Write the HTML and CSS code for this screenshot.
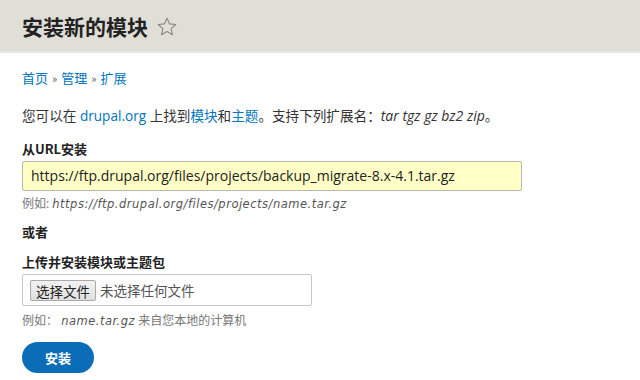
FILE: index.html
```html
<!DOCTYPE html>
<html lang="zh-CN">
<head>
<meta charset="utf-8">
<title>安装新的模块</title>
<link rel="stylesheet" href="styles.css">
</head>
<body>
<header class="page-header">
  <h1 class="title">安装新的模块</h1>
  <svg class="star" width="20" height="20" viewBox="0 0 20 20" aria-hidden="true">
    <path d="M10 1.2l2.6 5.7 6.2.6-4.7 4.2 1.4 6.1-5.5-3.2-5.5 3.2 1.4-6.1-4.7-4.2 6.2-.6z" fill="none" stroke="#8a8a84" stroke-width="1.1" stroke-linejoin="round"/>
  </svg>
</header>
<main class="content">
  <nav class="breadcrumb"><a href="#">首页</a><span class="sep">»</span><a href="#">管理</a><span class="sep">»</span><a href="#">扩展</a></nav>
  <p class="intro">您可以在 <a href="#">drupal.org</a> 上找到<a href="#">模块</a>和<a href="#">主题</a>。支持下列扩展名：<em>tar tgz gz bz2 zip</em>。</p>
  <div class="field field-url">
    <label class="label">从URL安装</label>
    <div class="text-input">https://ftp.drupal.org/files/projects/backup_migrate-8.x-4.1.tar.gz</div>
    <div class="desc">例如: <em class="mono">https://ftp.drupal.org/files/projects/name.tar.gz</em></div>
  </div>
  <div class="or">或者</div>
  <div class="field field-upload">
    <label class="label">上传并安装模块或主题包</label>
    <div class="file-input"><span class="file-btn">选择文件</span><span class="file-none">未选择任何文件</span></div>
    <div class="desc">例如： <em class="mono">name.tar.gz</em> 来自您本地的计算机</div>
  </div>
  <button class="install">安装</button>
</main>
</body>
</html>
```
FILE: styles.css
```css
html, body {
  margin: 0;
  padding: 0;
  background: #fff;
}
body {
  font-family: "Open Sans", "Noto Sans CJK SC", sans-serif;
  color: #222;
  font-size: 13px;
}
a {
  color: #0074bd;
  text-decoration: none;
}
.page-header {
  height: 51px;
  background: #dfdfd7;
  border-bottom: 2px solid #e6e6e2;
  display: flex;
  align-items: center;
  padding: 0 22px;
  gap: 9px;
  box-sizing: content-box;
}
.title {
  margin: 0;
  font-family: "Noto Sans CJK SC", sans-serif;
  font-size: 21px;
  font-weight: 700;
  color: #222;
  line-height: 1;
  padding-top: 2px;
}
.star {
  margin-top: 3px;
}
.content {
  padding: 0 22px;
}
.breadcrumb {
  margin-top: 16px;
  font-family: "Noto Sans CJK SC", sans-serif;
  font-size: 13px;
  line-height: 18px;
}
.breadcrumb .sep {
  color: #555;
  font-size: 11px;
  margin: 0 4px;
}
.intro {
  margin: 19px 0 0;
  font-size: 13.6px;
  line-height: 20px;
  color: #333;
}
.intro em {
  font-style: italic;
  font-size: 14px;
}
.field-url {
  margin-top: 14px;
}
.label {
  display: block;
  font-family: "Noto Sans CJK SC", sans-serif;
  font-weight: 700;
  font-size: 13px;
  line-height: 18px;
  color: #222;
}
.text-input {
  margin-top: 3px;
  width: 500px;
  height: 30px;
  box-sizing: border-box;
  border: 1px solid #b8b8b0;
  border-radius: 2px;
  background: #ffffc6;
  padding: 0 8px;
  font-family: "Open Sans", sans-serif;
  font-size: 14px;
  line-height: 28px;
  color: #222;
}
.desc {
  margin-top: 5px;
  font-size: 12px;
  line-height: 16px;
  color: #777;
}
.desc .mono {
  font-family: "DejaVu Sans", sans-serif;
  font-style: italic;
  font-size: 11.5px;
  color: #555;
  letter-spacing: 0.5px;
}
.or {
  margin-top: 11px;
  font-family: "Noto Sans CJK SC", sans-serif;
  font-weight: 700;
  font-size: 13px;
  line-height: 18px;
}
.field-upload {
  margin-top: 12px;
}
.file-input {
  margin-top: 3px;
  width: 290px;
  height: 32px;
  box-sizing: border-box;
  border: 1px solid #c8c8c0;
  border-radius: 2px;
  display: flex;
  align-items: center;
  padding: 0 7px;
  gap: 4px;
  font-family: "Noto Sans CJK SC", sans-serif;
  font-size: 13.5px;
}
.file-btn {
  height: 21px;
  line-height: 20px;
  padding: 0 5px;
  box-sizing: border-box;
  border: 1px solid #a9a9a9;
  border-radius: 2px;
  background: linear-gradient(#f2f2f2, #e0e0e0);
  color: #222;
}
.file-none {
  color: #555;
}
.field-upload .desc {
  margin-top: 7px;
}
.install {
  margin-top: 13px;
  width: 72px;
  height: 31px;
  border: none;
  border-radius: 16px;
  background: #0b6db7;
  color: #fff;
  font-family: "Noto Sans CJK SC", sans-serif;
  font-weight: 700;
  font-size: 13px;
  padding: 0;
}
```
